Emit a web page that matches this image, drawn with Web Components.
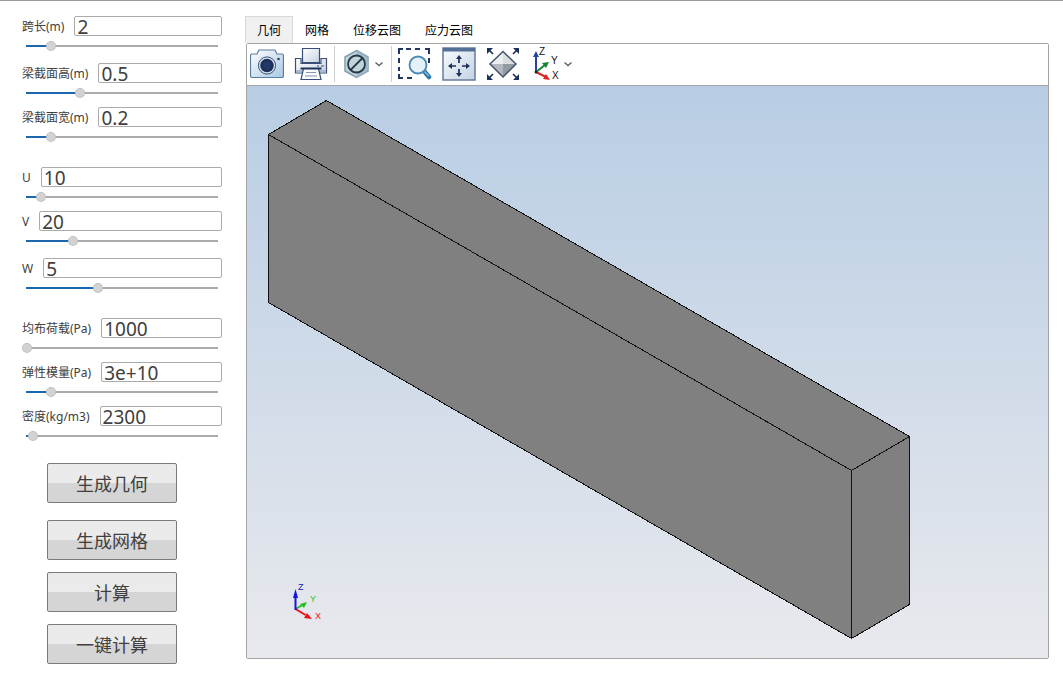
<!DOCTYPE html>
<html lang="zh-CN">
<head>
<meta charset="utf-8">
<title>梁分析</title>
<style>
  body { margin: 0; background: #fff; color: #404040; font: 12px/16px "Noto Sans", "Noto Sans CJK SC", sans-serif; }
</style>
</head>
<body>
<beam-app></beam-app>

<template id="app-template">
  <style>
    :host { display: flex; box-sizing: border-box; min-height: 100vh; padding: 15px 14px 9px 22px; gap: 23px; border-top: 1px solid #999; }
    .side { flex: none; width: 200px; display: flex; flex-direction: column; }
    .loose { margin-top: 12px; }
    .tight { margin-top: 9px; }
    .section { margin-top: 25px; }
    .actions { display: flex; flex-direction: column; align-items: center; gap: 12px; margin: 22px 20px 0 0; }
    .actions :first-child { margin-bottom: 5px; }
    main { flex: 1; min-width: 0; display: flex; flex-direction: column; margin-bottom: 5px; }
    .pane { flex: 1; display: flex; flex-direction: column; margin-left: 1px; border: 1px solid #a5a5a5; border-radius: 2px; }
    beam-view { flex: 1; }
  </style>
  <form class="side">
    <param-field label="跨长(m)" value="2" level="12.6"></param-field>
    <param-field class="loose" label="梁截面高(m)" value="0.5" level="27.9"></param-field>
    <param-field class="tight" label="梁截面宽(m)" value="0.2" level="12.6"></param-field>
    <param-field class="section" label="U" value="10" level="7.4"></param-field>
    <param-field class="tight" label="V" value="20" level="24.2"></param-field>
    <param-field class="loose" label="W" value="5" level="37.4"></param-field>
    <param-field class="section" label="均布荷载(Pa)" value="1000" level="0"></param-field>
    <param-field class="tight" label="弹性模量(Pa)" value="3e+10" level="12.6"></param-field>
    <param-field class="tight" label="密度(kg/m3)" value="2300" level="3.2"></param-field>
    <div class="actions">
      <action-button>生成几何</action-button>
      <action-button>生成网格</action-button>
      <action-button>计算</action-button>
      <action-button>一键计算</action-button>
    </div>
  </form>
  <main>
    <result-tabs items="几何,网格,位移云图,应力云图"></result-tabs>
    <div class="pane">
      <view-toolbar></view-toolbar>
      <beam-view></beam-view>
    </div>
  </main>
</template>

<template id="field-template">
  <style>
    :host { display: block; }
    .row { display: flex; align-items: center; gap: 10px; height: 20px; }
    label { flex: none; padding-top: 2px; line-height: 16px; white-space: nowrap; }
    .value { flex: 1; min-width: 0; box-sizing: border-box; height: 20px; padding: 1px 2px 0; border: 1px solid #ababab; border-radius: 2px; background: #fff; color: #404040; font: 19px/17px "Noto Sans", sans-serif; outline: 0; }
    .slider { --level: 0; display: block; -webkit-appearance: none; appearance: none; width: 100%; height: 10px; margin: 5px 0 0; background: linear-gradient(#1c68ae, #1c68ae) 4px 4px / calc(var(--level) * 1%) 2px no-repeat, linear-gradient(#ababab, #ababab) 4px 4px / calc(100% - 8px) 2px no-repeat; outline: 0; }
    .slider::-webkit-slider-runnable-track { height: 10px; }
    .slider::-webkit-slider-thumb { -webkit-appearance: none; box-sizing: border-box; width: 10px; height: 10px; border: 1px dotted #b0b0b0; border-radius: 50%; background: #d2d2d2; }
  </style>
  <div class="row"><label for="value"></label><input id="value" class="value" type="text"></div>
  <input class="slider" type="range" min="0" max="100" step="0.1">
</template>

<template id="button-template">
  <style>
    :host { display: block; }
    button { display: block; width: 130px; height: 40px; padding: 0 0 1px; border: 1px solid #7b7b7b; border-radius: 2px; background: linear-gradient(#eaeaea, #ebebeb 50%, #d5d5d5 50%, #d5d5d5) border-box; color: #404040; font: 18px/24px "Noto Sans CJK SC", sans-serif; }
  </style>
  <button type="button"><slot></slot></button>
</template>

<template id="toolbar-template">
  <style>
    :host { display: flex; box-sizing: border-box; align-items: center; gap: 6px; height: 42px; padding: 0 0 1px 3px; border-bottom: 1px solid #a5a5a5; background: #fff; }
    .group { display: flex; gap: 10px; }
    .sep { width: 1px; height: 36px; background: #cfcfcf; }
    button { display: flex; align-items: center; padding: 0; border: 0; background: none; }
    svg { display: block; flex: none; }
    text { font: 10px "Liberation Sans", sans-serif; fill: #111; }
  </style>
  <div class="group">
    <button type="button" aria-label="截图">
      <svg width="34" height="34" viewBox="0 0 34 34">
        <defs><linearGradient id="cam" x1="0" y1="0" x2="1" y2="1"><stop offset="0" stop-color="#fff"/><stop offset="1" stop-color="#a9c8e4"/></linearGradient></defs>
        <path d="M2 7h5l2-4h16l2 4h5q1.500 0 1.500 2v19.500q0 2-1.500 2H2q-1.500 0-1.500-2V9q0-2 1.500-2z" fill="url(#cam)" stroke="#5a7ba0" stroke-width="1.200"/>
        <circle cx="17" cy="18.500" r="8.600" fill="#d8e4ef" stroke="#35537c"/>
        <circle cx="17" cy="18.500" r="6.800" fill="#1d3158"/>
        <circle cx="17" cy="18.500" r="4" fill="#22386a"/>
        <circle cx="28.500" cy="12" r="1.300" fill="#2a4370"/>
      </svg>
    </button>
    <button type="button" aria-label="打印">
      <svg width="34" height="34" viewBox="0 0 34 34" stroke="#3a4f78" stroke-width="1.200">
        <defs><linearGradient id="prn" x1="0" y1="0" x2="1" y2="1"><stop offset="0" stop-color="#fff"/><stop offset="1" stop-color="#c6d3e1"/></linearGradient></defs>
        <path d="M8.500 1.500h17v14h-17z" fill="url(#prn)"/>
        <path d="M1.500 11.500H7v5h20v-5h5.500v14.500h-31z" fill="url(#prn)"/>
        <path d="M2 23h30v2.500H2z" fill="#a9bbd0" stroke="none"/>
        <path d="M23 19h2m2 0h3"/>
        <path d="M9.500 21.500h15l2.500 11H7z" fill="#f8fafc"/>
        <path d="M6.500 21.500h21" stroke="#1d315b" stroke-width="2"/>
        <path d="M12 25.500h10M11 29h12" stroke="#8796b0"/>
      </svg>
    </button>
  </div>
  <span class="sep"></span>
  <div class="group">
    <button type="button" aria-label="显示方式">
      <svg width="32" height="34" viewBox="0 0 32 34">
        <path d="M15.500 3.500l11.500 6.500v14l-11.500 6.500L4 24V10z" fill="#c3d5df" stroke="#829eae" stroke-width="1.500"/>
        <path d="M15.500 4v26l11-6V10z" fill="#a3bbc9"/>
        <circle cx="15.500" cy="17" r="8.500" fill="#c3d3dc" stroke="#253947" stroke-width="1.800"/>
        <path d="M9.500 23l12-12" stroke="#253947" stroke-width="1.800"/>
      </svg>
      <svg width="12" height="12" viewBox="0 0 12 12"><path d="M2.500 4.500L6 7.500l3.500-3" fill="none" stroke="#5e666e" stroke-width="1.500"/></svg>
    </button>
  </div>
  <span class="sep"></span>
  <div class="group">
    <button type="button" aria-label="框选缩放">
      <svg width="34" height="34" viewBox="0 0 34 34">
        <path d="M1 7V2h4M8 2h5M17 2h5M27 2h4v5M1 11v5M1 20v4M1 27v4h4M9 31h5M31 11v5" fill="none" stroke="#203762" stroke-width="2"/>
        <path d="M26 24l5 6" stroke="#2877a8" stroke-width="4.500" stroke-linecap="round"/>
        <path d="M26 24l5 5" stroke="#7db9dc" stroke-width="1.500"/>
        <circle cx="20" cy="18" r="8.500" fill="#e4f1f9" stroke="#4b88b4" stroke-width="1.800"/>
      </svg>
    </button>
    <button type="button" aria-label="适合窗口">
      <svg width="34" height="34" viewBox="0 0 34 34">
        <defs><linearGradient id="win" x1="0" y1="0" x2="1" y2="1"><stop offset="0" stop-color="#fafcfe"/><stop offset="1" stop-color="#c4d2e2"/></linearGradient></defs>
        <path d="M1 1h32v32H1z" fill="url(#win)" stroke="#657c9d" stroke-width="1.500"/>
        <path d="M1 1h32v3.500H1z" fill="#536f97"/>
        <path d="M17 16v-5M17 22v5M14 19H9M20 19h5" stroke="#1d315b" stroke-width="1.700"/>
        <path d="M17 8l3 4h-6zM17 30l3-4h-6zM6 19l4-3v6zM28 19l-4-3v6z" fill="#1d315b"/>
      </svg>
    </button>
    <button type="button" aria-label="全部显示">
      <svg width="34" height="34" viewBox="0 0 34 34">
        <path d="M17 5v12H4z" fill="#eceef0"/><path d="M17 5v12h13z" fill="#dadde0"/><path d="M4 17h13v13z" fill="#b5b9bf"/><path d="M17 17h13L17 30z" fill="#949aa2"/>
        <path d="M17 4.500L30 17 17 30 4 17z" fill="none" stroke="#44546d" stroke-width="1.500"/>
        <path d="M3 3l4 4M31 3l-4 4M3 31l4-4M31 31l-4-4" stroke="#1d315b" stroke-width="1.700"/>
        <path d="M1 1h6L1 7zM33 1v6l-6-6zM1 33v-6l6 6zM33 33h-6l6-6z" fill="#1d315b"/>
      </svg>
    </button>
    <button type="button" aria-label="视图方向">
      <svg width="32" height="38" viewBox="0 0 32 38">
        <path d="M6 27V11" stroke="#26459a" stroke-width="2"/><path d="M6 6l3 6H3z" fill="#26459a"/>
        <path d="M6 27l9-7" stroke="#168438" stroke-width="2"/><path d="M19 17l-3 6-4-5z" fill="#168438"/>
        <path d="M6 27l10 5" stroke="#df2323" stroke-width="2"/><path d="M20 35l-7-1 3-5z" fill="#df2323"/>
        <circle cx="6" cy="27" r="1.500" fill="#222"/>
        <text x="9" y="10">Z</text><text x="21" y="19">Y</text><text x="22" y="34">X</text>
      </svg>
      <svg width="12" height="12" viewBox="0 0 12 12"><path d="M2.500 4.500L6 7.500l3.500-3" fill="none" stroke="#5e666e" stroke-width="1.500"/></svg>
    </button>
  </div>
</template>

<template id="view-template">
  <style>
    :host { display: flex; position: relative; min-height: 300px; background: linear-gradient(#b8cde4, #e8e9ed); }
    .beam { flex: 1; width: 100%; min-width: 0; }
    .axes { position: absolute; left: 40px; bottom: 30px; }
    text { font: 9px "Liberation Sans", sans-serif; }
  </style>
  <svg class="beam" viewBox="0 0 801 572" role="img" aria-label="梁几何模型">
    <g fill="#808080" stroke="#111" stroke-width="1" stroke-linejoin="round" shape-rendering="crispEdges">
      <path d="M21.500 48.500L79.500 14.500 662.500 350.500 604.500 384.500z"/>
      <path d="M21.500 48.500L604.500 384.500V552.500L21.500 216.500z"/>
      <path d="M604.500 384.500L662.500 350.500V518.500L604.500 552.500z"/>
    </g>
  </svg>
  <svg class="axes" width="40" height="48" viewBox="0 0 40 48" aria-hidden="true">
    <path d="M8.500 29l7-4" stroke="#1fc41f" stroke-width="2"/><path d="M20 22l-3 6-4-4z" fill="#1fc41f"/>
    <path d="M8.500 29l10 6" stroke="#e81414" stroke-width="2"/><path d="M25 39l-8-1 3-5z" fill="#e81414"/>
    <path d="M8.500 30V17" stroke="#1414e0" stroke-width="2"/><path d="M8.500 9l2.500 9H6z" fill="#1414e0"/>
    <text x="11" y="10" fill="#2020c0">Z</text><text x="23" y="22" fill="#1fc41f">Y</text><text x="28" y="39" fill="#e81414">X</text>
  </svg>
</template>

<script>
  class TemplateElement extends HTMLElement {
    constructor() {
      super();
      const template = document.getElementById(this.constructor.template);
      this.attachShadow({ mode: "open" }).append(template.content.cloneNode(true));
    }
  }

  customElements.define("param-field", class extends TemplateElement {
    static template = "field-template";
    connectedCallback() {
      const label = this.getAttribute("label");
      const slider = this.shadowRoot.querySelector(".slider");
      this.shadowRoot.querySelector("label").textContent = label;
      this.shadowRoot.querySelector(".value").value = this.getAttribute("value");
      slider.setAttribute("aria-label", label);
      slider.value = this.getAttribute("level");
      const fill = () => slider.style.setProperty("--level", slider.value);
      slider.addEventListener("input", fill);
      fill();
    }
  });

  customElements.define("action-button", class extends TemplateElement {
    static template = "button-template";
  });

  customElements.define("result-tabs", class extends HTMLElement {
    connectedCallback() {
      const root = this.attachShadow({ mode: "open" });
      root.innerHTML = `
        <style>
          :host { display: block; }
          div { display: flex; }
          button { box-sizing: border-box; height: 27px; padding: 0 11px; border: 1px solid transparent; border-bottom: 0; background: none; color: #000; font: 12px/16px "Noto Sans CJK SC", sans-serif; }
          button[aria-selected="true"] { background: #f0f0f0; border-color: #d9d9d9; }
        </style>
        <div role="tablist">${this.getAttribute("items").split(",").map((name, i) =>
          `<button type="button" role="tab" aria-selected="${i === 0}">${name}</button>`).join("")}</div>`;
      const tabs = [...root.querySelectorAll("button")];
      tabs.forEach(tab => tab.addEventListener("click", () =>
        tabs.forEach(other => other.setAttribute("aria-selected", other === tab))));
    }
  });

  customElements.define("view-toolbar", class extends TemplateElement {
    static template = "toolbar-template";
  });

  customElements.define("beam-view", class extends TemplateElement {
    static template = "view-template";
  });

  customElements.define("beam-app", class extends TemplateElement {
    static template = "app-template";
  });
</script>
</body>
</html>
